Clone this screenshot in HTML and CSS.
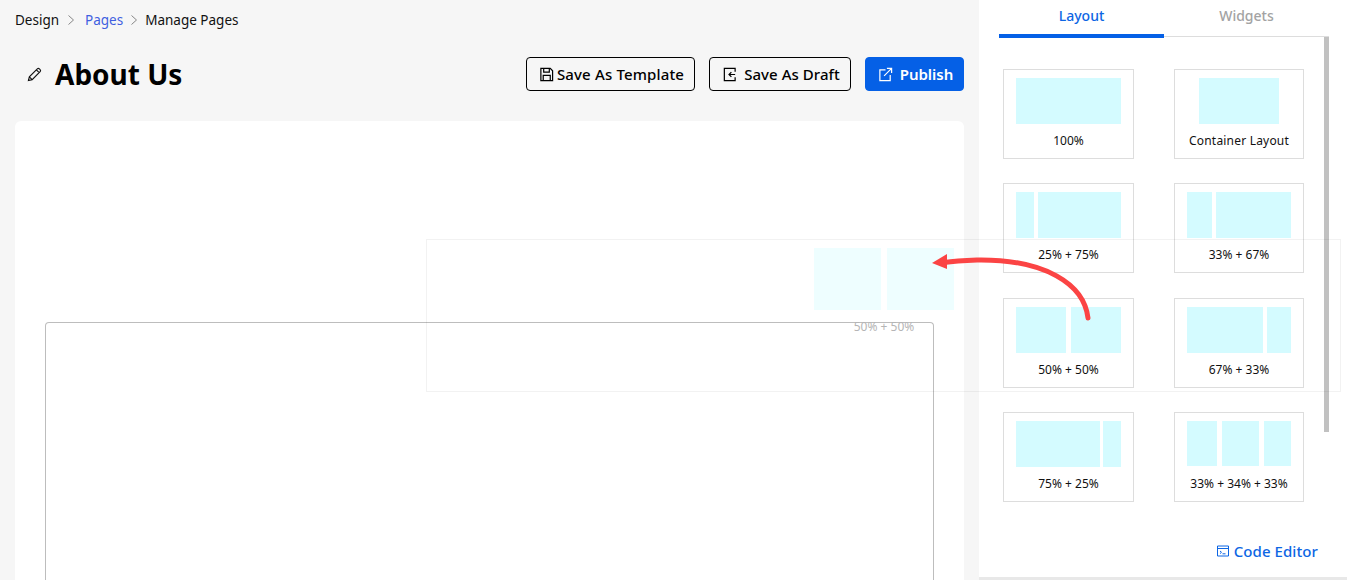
FILE: index.html
```html
<!DOCTYPE html>
<html lang="en">
<head>
<meta charset="utf-8">
<title>About Us</title>
<link rel="stylesheet" href="styles.css">
</head>
<body>
<div class="page">
  <main class="main">
    <nav class="crumbs">
      <span>Design</span>
      <svg class="chev" viewBox="0 0 6 10"><path d="M.5.500L5.500 5 .5 9.500"/></svg>
      <span class="crumb-link">Pages</span>
      <svg class="chev" viewBox="0 0 6 10"><path d="M.5.500L5.500 5 .5 9.500"/></svg>
      <span>Manage Pages</span>
    </nav>
    <header class="head">
      <svg class="pencil" viewBox="0 0 16 16"><path d="M1.500 14.500l1-4L11 2a1.600 1.600 0 0 1 2.200 0l.8.8a1.600 1.600 0 0 1 0 2.200l-8.500 8.500zM2.500 10.500l3 3M10 3l3 3"/></svg>
      <h1 class="title">About Us</h1>
      <div class="actions">
        <button class="btn btn-template">
          <svg class="ic" viewBox="0 0 16 16"><path d="M2 1.500h10l2.500 2.500v10.500h-12.500zM5 1.500v4h6v-4M4.500 14.500v-5.500h7.500v5.500"/></svg>
          Save As Template
        </button>
        <button class="btn btn-draft">
          <svg class="ic" viewBox="0 0 16 16"><path d="M14 5V1.500H2.500v13H14V11M14 8H7.500M10 5.500L7.500 8l2.500 2.500"/></svg>
          Save As Draft
        </button>
        <button class="btn btn-primary">
          <svg class="ic" viewBox="0 0 16 16"><path d="M8 3H2v11.500h11V8.500M6.500 9.500L14.500 1.500M9.500 1.500h5v5"/></svg>
          Publish
        </button>
      </div>
    </header>
    <section class="canvas">
      <div class="dropzone"></div>
    </section>
  </main>
  <aside class="side">
    <div class="tabs">
      <div class="tab tab-on">Layout</div>
      <div class="tab">Widgets</div>
    </div>
    <div class="panel">
      <div class="grid">
        <div class="card"><div class="cols"><i class="c1"></i></div><p>100%</p></div>
        <div class="card"><div class="cols cols-narrow"><i class="c1"></i></div><p class="wide">Container Layout</p></div>
        <div class="card"><div class="cols"><i class="w18"></i><i class="c1"></i></div><p>25% + 75%</p></div>
        <div class="card"><div class="cols"><i class="w25"></i><i class="c1"></i></div><p>33% + 67%</p></div>
        <div class="card"><div class="cols cols-wide"><i class="c1"></i><i class="c1"></i></div><p>50% + 50%</p></div>
        <div class="card"><div class="cols"><i class="c1"></i><i class="w24"></i></div><p>67% + 33%</p></div>
        <div class="card"><div class="cols cols-tight"><i class="c1"></i><i class="w18"></i></div><p>75% + 25%</p></div>
        <div class="card"><div class="cols cols-wide cols-three"><i class="w30"></i><i class="w37"></i><i class="w27"></i></div><p>33% + 34% + 33%</p></div>
      </div>
      <div class="scrollbar"></div>
    </div>
    <div class="foot">
      <a class="code">
        <svg class="ic-code" viewBox="0 0 12 12"><path d="M.5 1h11v10H.5zM.5 3.500h11M3 6l1.500 1.300L3 8.600M5.500 8.800h3"/></svg>
        Code Editor
      </a>
    </div>
  </aside>
</div>
<div class="ghost">
  <div class="ghost-cols"><i></i><i></i></div>
  <p>50% + 50%</p>
</div>
<svg class="arrow" viewBox="0 0 1347 580">
  <path class="arrow-line" d="M1088 318C1084 284 1045 259 977 260C965 260.500 955 261 944 262.500"/>
  <path class="arrow-head" d="M932 263L947 254L947 269Z"/>
</svg>
</body>
</html>
```
FILE: styles.css
```css
* { box-sizing: border-box; }
html, body { margin: 0; height: 100%; overflow: hidden; }
body {
  position: relative;
  background: #f6f6f6;
  color: #000;
  font-family: "Noto Sans", "Open Sans", sans-serif;
}
.page { display: flex; height: 580px; }

.main { width: 979px; padding: 0 15px; display: flex; flex-direction: column; }
.crumbs { flex: none; display: flex; align-items: center; height: 40px; font-size: 13.500px; color: #111; }
.crumb-link { color: #3f5fe0; }
.chev { width: 6px; height: 10px; margin: 0 11px 0 9px; fill: none; stroke: #888; stroke-width: 1; }
.crumb-link + .chev { margin: 0 8px; }

.head { flex: none; display: flex; align-items: center; height: 34px; margin-top: 17px; }
.pencil { width: 15px; height: 15px; margin-left: 12px; fill: none; stroke: #111; stroke-width: 1.200; }
.title { margin: 0 0 0 13px; font-size: 28px; font-weight: 700; line-height: 34px; }
.actions { margin-left: auto; display: flex; gap: 14px; }
.btn {
  height: 34px;
  display: flex;
  align-items: center;
  justify-content: center;
  border: 1px solid #000;
  border-radius: 4px;
  background: transparent;
  color: #000;
  font: 500 15px "Noto Sans", sans-serif;
  padding: 0 0 0 2px;
}
.btn-template { width: 169px; gap: 3px; letter-spacing: .15px; }
.btn-draft { width: 142px; gap: 7px; letter-spacing: .05px; }
.btn-primary { width: 99px; gap: 7px; background: #0560e6; border-color: #0560e6; color: #fff; font-weight: 600; }
.ic { width: 15px; height: 15px; fill: none; stroke: currentColor; stroke-width: 1.300; }

.canvas {
  flex: 1;
  min-height: 0;
  margin-top: 30px;
  background: #fff;
  border-radius: 6px 6px 0 0;
  padding: 201px 30px 0;
}
.dropzone { height: 100%; border: 1px solid #bdbdbd; border-bottom: 0; border-radius: 4px 4px 0 0; }

.side { width: 368px; background: #fff; border-bottom: 3px solid #e8e8e8; display: flex; flex-direction: column; padding-left: 20px; }
.tabs { flex: none; display: flex; width: 330px; height: 37px; border-bottom: 1px solid #ddd; }
.tab { width: 165px; height: 38px; padding-top: 6px; text-align: center; font-size: 14px; font-weight: 500; color: #a3a3a3; }
.tab-on { color: #0d66e4; border-bottom: 4px solid #0560e6; }

.panel { flex: none; display: flex; height: 461px; width: 330px; }
.grid {
  width: 325px;
  padding: 32px 0 0 4px;
  display: grid;
  grid-template-columns: 131px 130px;
  column-gap: 40px;
  grid-auto-rows: 90px;
  row-gap: 24.300px;
  align-content: start;
}
.card { border: 1px solid #ddd; padding: 8px 12px 0; background: #fff; }
.card p { margin: 8px 0 0; text-align: center; font-size: 12px; line-height: 18px; color: #111; white-space: nowrap; }
.card .wide { letter-spacing: .2px; }
.cols { display: flex; gap: 4px; height: 46px; }
.cols-wide { gap: 5px; }
.cols-tight { gap: 3px; }
.cols-three { align-items: flex-start; }
.cols-three i { height: 45px; }
.cols i { display: block; background: #d4fbff; }
.cols-narrow { padding: 0 12px; }
.c1 { flex: 1; }
.w18 { width: 18px; }
.w24 { width: 24px; }
.w25 { width: 25px; }
.w30 { width: 30px; }
.w37 { width: 37px; }
.w27 { width: 27px; }
.scrollbar { width: 5px; height: 395px; background: #c1c1c1; }

.foot { flex: 1; display: flex; justify-content: flex-end; align-items: center; padding: 26px 29px 0 0; }
.code { display: flex; align-items: center; gap: 5px; color: #0d66e4; font-size: 15px; font-weight: 500; letter-spacing: .08px; }
.ic-code { width: 12px; height: 12px; fill: none; stroke: currentColor; stroke-width: 1; }

.ghost {
  position: absolute;
  left: 426px;
  top: 239px;
  width: 915px;
  height: 153px;
  border: 1px solid rgba(0, 0, 0, .05);
  padding: 8px 386px 0 387px;
}
.ghost-cols { display: flex; gap: 6px; height: 62px; }
.ghost-cols i { flex: 1; background: #eefeff; }
.ghost p { margin: 8px 0 0; text-align: center; font-size: 12px; line-height: 18px; color: #b5b5b5; white-space: nowrap; }

.arrow { position: absolute; left: 0; top: 0; width: 1347px; height: 580px; pointer-events: none; }
.arrow-line { fill: none; stroke: #fb4444; stroke-width: 5; stroke-linecap: round; }
.arrow-head { fill: #fb4444; }
```
